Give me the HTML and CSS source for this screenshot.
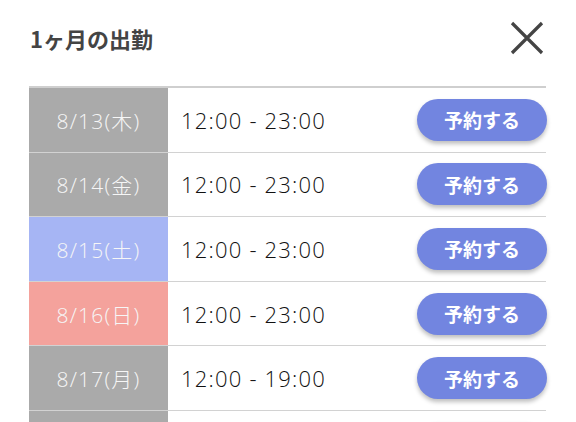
FILE: index.html
```html
<!DOCTYPE html>
<html lang="ja">
<head>
<meta charset="utf-8">
<link rel="stylesheet" href="styles.css">
</head>
<body>
<div class="modal">
  <header class="head">
    <h1 class="title">1ヶ月の出勤</h1>
    <button class="close" aria-label="閉じる">
      <svg width="34" height="34" viewBox="0 0 34 34"><path d="M2 2 L32 32 M32 2 L2 32" stroke="#444" stroke-width="3.2" fill="none"/></svg>
    </button>
  </header>
  <div class="table">
    <div class="row"><div class="date gray">8/13(木)</div><div class="time">12:00 - 23:00</div><button class="reserve">予約する</button></div>
    <div class="row"><div class="date gray">8/14(金)</div><div class="time">12:00 - 23:00</div><button class="reserve">予約する</button></div>
    <div class="row"><div class="date blue">8/15(土)</div><div class="time">12:00 - 23:00</div><button class="reserve">予約する</button></div>
    <div class="row"><div class="date red">8/16(日)</div><div class="time">12:00 - 23:00</div><button class="reserve">予約する</button></div>
    <div class="row"><div class="date gray">8/17(月)</div><div class="time">12:00 - 19:00</div><button class="reserve">予約する</button></div>
    <div class="row"><div class="date gray">8/18(火)</div><div class="time">12:00 - 23:00</div><button class="reserve">予約する</button></div>
  </div>
</div>
</body>
</html>
```
FILE: styles.css
```css
html, body {
  margin: 0;
  padding: 0;
  background: #fff;
  overflow: hidden;
  height: 422px;
}
body {
  font-family: "Open Sans", "Noto Sans CJK JP", sans-serif;
  color: #222;
}
.modal {
  width: 576px;
}
.head {
  display: flex;
  align-items: center;
  justify-content: space-between;
  height: 76px;
  padding: 0 32px 0 30px;
}
.title {
  margin: 0;
  font-size: 22px;
  font-weight: 700;
  color: #444;
  font-family: "Noto Sans CJK JP", sans-serif;
}
.close {
  border: 0;
  background: none;
  padding: 0;
  width: 34px;
  height: 34px;
  display: flex;
}
.table {
  margin: 10px 30px 0 29px;
  border-top: 2px solid #cfcfcf;
}
.row {
  display: flex;
  align-items: center;
  height: 63.6px;
  border-bottom: 1px solid #d2d2d2;
}
.date {
  width: 139px;
  align-self: stretch;
  display: flex;
  align-items: center;
  justify-content: center;
  color: #f6f6f6;
  font-size: 21px;
  font-weight: 300;
  letter-spacing: 1.2px;
  flex: none;
}
.gray { background: #aaaaaa; }
.blue { background: #a6b5f4; }
.red { background: #f4a29c; }
.time {
  flex: 1;
  padding-left: 13px;
  font-size: 22px;
  font-weight: 300;
  letter-spacing: 1.2px;
  color: #111;
}
.reserve {
  width: 130px;
  height: 42px;
  margin-right: -1px;
  border: 0;
  border-radius: 21px;
  background: #7285e0;
  color: #fff;
  font-family: "Noto Sans CJK JP", sans-serif;
  font-size: 19px;
  font-weight: 700;
  box-shadow: 0 3px 4px rgba(0,0,0,0.25);
  padding: 0;
}
```
